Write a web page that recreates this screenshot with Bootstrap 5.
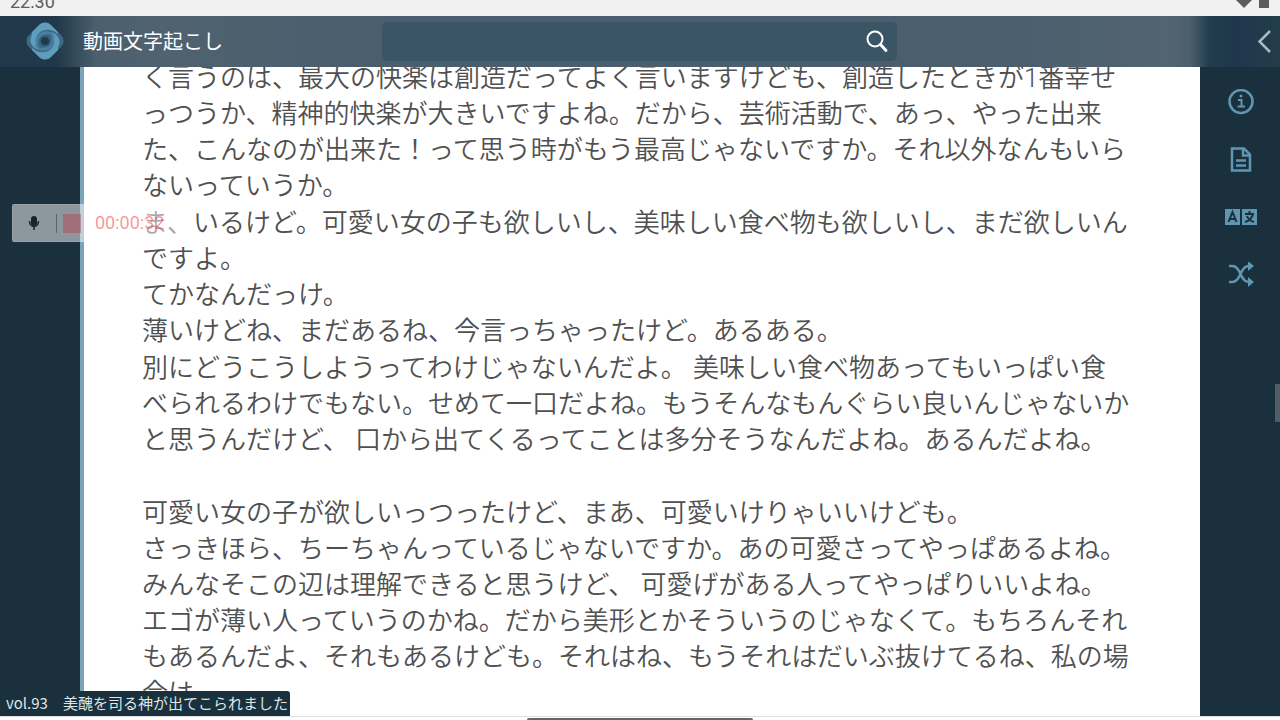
<!DOCTYPE html>
<html lang="ja">
<head>
<meta charset="utf-8">
<meta name="viewport" content="width=device-width, initial-scale=1">
<title>動画文字起こし</title>
<link href="https://cdn.jsdelivr.net/npm/bootstrap@5.3.0/dist/css/bootstrap.min.css" rel="stylesheet">
<style>
body { font-family: "Noto Sans CJK JP", sans-serif; background: #fff; }
.status-strip { height: 16px; background: #f1f1f1; font: 18px/20px Roboto, sans-serif; color: #5c5c5c; padding: 0 10px; }
.status-strip time { margin-top: -8px; }
.top-bar { height: 51px; background: linear-gradient(90deg, #20384a 0, #20384a 56px, #4b5f6d 96px, #50626f 160px, #4a5e6e 360px, #4a5e6e calc(100% - 280px), #52646f calc(100% - 110px), #4b5f6d calc(100% - 90px), #213c4c calc(100% - 70px), #20374b calc(100% - 45px), #233d4b 100%); }
.brand-area { width: 382px; padding-left: 25px; gap: 18px; color: #fff; font-size: 20px; line-height: 28px; padding-bottom: 2px; }
.search-box { height: 39px; width: 515px; background: #3a5666; border-radius: 5px; }
.search-box input { background: transparent; border: 0; outline: 0; color: #fff; }
.plain-btn { background: none; border: 0; padding: 0; line-height: 1; display: block; }
.main-area { min-height: 0; background: #fff; }
.left-rail { width: 80px; background: #1a313d; }
.right-rail { width: 80px; background: #1a313d; padding: 20px 0 0 2px; gap: 29px; }
.right-rail a { height: 29px; display: flex; align-items: center; color: #6095b3; }
.transcript { border-left: 4px solid #7ba3ba; color: #505050; font-family: Roboto, "Noto Sans CJK JP DemiLight", "Noto Sans CJK JP", sans-serif; font-weight: 350; font-size: 26px; line-height: 36px; padding: 0 68px 0 58px; min-width: 0; }
.transcript p { margin-bottom: 1px; }
.transcript p:first-child { margin-top: -7px; }
.transcript .scene-end { margin-bottom: 37px; }
.recorder { left: 12px; top: 204px; width: 174px; height: 38px; background: rgba(255,255,255,.5); border: 1px solid rgba(255,255,255,.1); border-radius: 2px; padding-left: 15px; }
.recorder .divider { width: 1px; height: 19px; background: #59666d; margin-left: 16px; }
.recorder .stop { width: 18px; height: 19px; background: rgba(186,62,72,.45); margin-left: 6px; }
.recorder time { font: 18px/20px Roboto, sans-serif; color: rgba(250,60,70,.55); margin-left: 14px; }
.volume-tag { left: 0; bottom: 4px; height: 25px; padding: 0 2px 0 6px; background: #1a313d; color: #dfe5e8; font-size: 15px; line-height: 23px; border-radius: 0 3px 0 0; white-space: pre; }
.scroll-mark { right: 0; top: 384px; width: 5px; height: 38px; background: #525e66; }
.home-strip { height: 4px; border-top: 1px solid #dcdfe1; }
.home-strip span { width: 226px; height: 2px; background: #666; border-radius: 2px 2px 0 0; }
</style>
</head>
<body class="vh-100 d-flex flex-column overflow-hidden position-relative">
<div class="status-strip d-flex justify-content-between overflow-hidden flex-shrink-0">
  <time>22:30</time>
  <svg width="36" height="16" viewBox="0 0 36 16" fill="#5c5c5c" aria-hidden="true"><path d="M2 0h16l-8 8zM25 0h10v8H25z"/></svg>
</div>
<header class="top-bar d-flex align-items-center flex-shrink-0">
  <div class="brand-area d-flex align-items-center flex-shrink-0">
    <svg width="40" height="40" viewBox="0 0 40 40" aria-hidden="true">
      <clipPath id="diamond"><rect x="4.500" y="4.500" width="31" height="31" rx="8" transform="rotate(45 20 20)"/></clipPath>
      <g clip-path="url(#diamond)">
        <path d="M0 0h40v40H0z" fill="#3d6986"/>
        <path d="M7 14L7 0H33L33 13C28 8 19 7 14 12C9 17 10 25 15 29C7 28 3 20 7 14z" fill="#5f9dbd"/>
        <path d="M33 26L33 40H7L7 27C12 32 21 33 26 28C31 23 30 15 25 11C33 12 37 20 33 26z" fill="#5f9dbd"/>
        <path d="M14 13C20 8 28 10 31 17C26 12 20 12 16 16C12 20 13 25 15 29C10 25 9 18 14 13z" fill="#4a809f"/>
        <path d="M26 27C20 32 12 30 9 23C14 28 20 28 24 24C28 20 27 15 25 11C30 15 31 22 26 27z" fill="#4a809f"/>
      </g>
      <circle cx="20" cy="20" r="6" fill="#34607c"/>
      <circle cx="20" cy="20" r="4" fill="#1d3b4c"/>
    </svg>
    <span>動画文字起こし</span>
  </div>
  <form class="search-box d-flex align-items-center" role="search" onsubmit="return false">
    <input class="flex-grow-1 h-100 px-3" type="text" aria-label="検索">
    <button class="plain-btn me-2" type="submit" aria-label="検索"><svg width="24" height="24" viewBox="0 0 24 24" fill="none" stroke="#fff" stroke-width="2"><circle cx="10" cy="9" r="7.500"/><path d="M15.500 14.500l5.500 6" stroke-width="3" stroke-linecap="round"/></svg></button>
  </form>
  <button class="plain-btn ms-auto pe-2" type="button" aria-label="戻る"><svg width="14" height="24" viewBox="0 0 14 24" fill="none" stroke="#a9b9c1" stroke-width="2.500"><path d="M12 1L1.500 11.500l10.500 10.500"/></svg></button>
</header>
<main class="main-area d-flex flex-grow-1">
  <div class="left-rail flex-shrink-0"></div>
  <article class="transcript flex-grow-1 overflow-hidden">
    <p>く言うのは、最大の快楽は創造だってよく言いますけども、創造したときが1番幸せっつうか、精神的快楽が大きいですよね。だから、芸術活動で、あっ、やった出来た、こんなのが出来た！って思う時がもう最高じゃないですか。それ以外なんもいらないっていうか。</p>
    <p>ま、いるけど。可愛い女の子も欲しいし、美味しい食べ物も欲しいし、まだ欲しいんですよ。<br>てかなんだっけ。<br>薄いけどね、まだあるね、今言っちゃったけど。あるある。</p>
    <p class="scene-end">別にどうこうしようってわけじゃないんだよ。 美味しい食べ物あってもいっぱい食<br>べられるわけでもない。せめて一口だよね。もうそんなもんぐらい良いんじゃないかと思うんだけど、 口から出てくるってことは多分そうなんだよね。あるんだよね。</p>
    <p>可愛い女の子が欲しいっつったけど、まあ、可愛いけりゃいいけども。<br>さっきほら、ちーちゃんっているじゃないですか。あの可愛さってやっぱあるよね。<br>みんなそこの辺は理解できると思うけど、 可愛げがある人ってやっぱりいいよね。<br>エゴが薄い人っていうのかね。だから美形とかそういうのじゃなくて。もちろんそれもあるんだよ、それもあるけども。それはね、もうそれはだいぶ抜けてるね、私の場合は</p>
  </article>
  <nav class="right-rail d-flex flex-column align-items-center flex-shrink-0" aria-label="ツール">
    <a href="#" aria-label="情報"><svg width="26" height="26" viewBox="0 0 26 26" fill="none" stroke="currentColor" stroke-width="2.500"><circle cx="13" cy="12.500" r="11.500"/><path d="M10 11h3.500v6M9.500 17.500h7.500" stroke-width="2"/><circle cx="13" cy="7" r="1.500" fill="currentColor" stroke="none"/></svg></a>
    <a href="#" aria-label="文書"><svg width="22" height="26" viewBox="0 0 22 26" fill="none" stroke="currentColor" stroke-width="2.500"><path d="M2 1.500h12l6 6v16H2zM13 1.500v7h7M6 13.500h10M6 18.500h10"/></svg></a>
    <a href="#" aria-label="翻訳"><svg width="34" height="20" viewBox="0 0 34 20"><path fill="currentColor" d="M1 1h15v16H1zM18 1h15v16H18z"/><path d="M4.500 14L8.500 4l4 10M6 11h5M21 6h9M25.500 3v3M29 6c-1 4-4 7-8 8M23 8c1 3 4 5 7 6" fill="none" stroke="#1a313d" stroke-width="2"/></svg></a>
    <a href="#" aria-label="シャッフル"><svg width="26" height="28" viewBox="0 0 26 28" fill="none" stroke="currentColor" stroke-width="2.500"><path d="M1 4h3c4 0 5 2 7 5l3 6c2 3 3 5 8 5M1 20h3c4 0 5-2 7-5l3-6c2-3 3-5 8-5"/><path d="M20-1l6 5-6 5zM20 15l6 5-6 5z" fill="currentColor" stroke="none"/></svg></a>
  </nav>
</main>
<footer class="home-strip d-flex justify-content-center align-items-end flex-shrink-0"><span></span></footer>
<div class="recorder position-absolute d-flex align-items-center">
  <svg width="12" height="18" viewBox="0 0 12 18" aria-hidden="true"><rect x="3" y="2" width="6" height="10" rx="3" fill="#17232b"/><path d="M1.500 7c0 7 9 7 9 0M6 12v4" fill="none" stroke="#17232b" stroke-width="1.500"/></svg>
  <span class="divider"></span><span class="stop"></span><time>00:00:32</time>
</div>
<div class="volume-tag position-absolute">vol.93　美醜を司る神が出てこられました</div>
<div class="scroll-mark position-absolute"></div>
<script src="https://cdn.jsdelivr.net/npm/bootstrap@5.3.0/dist/js/bootstrap.bundle.min.js"></script>
</body>
</html>
